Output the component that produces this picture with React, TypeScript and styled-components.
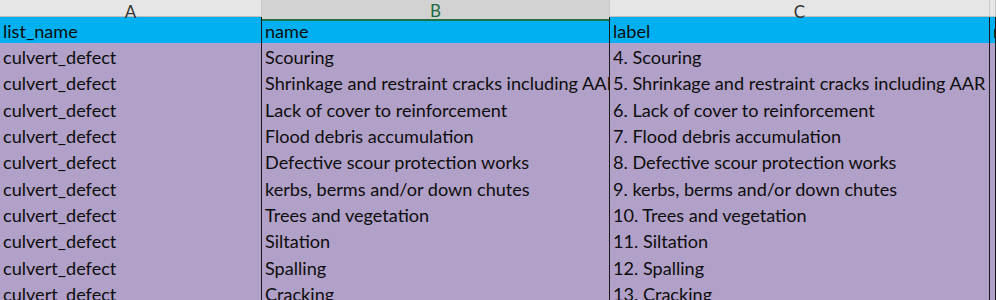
import React from 'react'
import styled, { createGlobalStyle, css } from 'styled-components'

const GlobalStyle = createGlobalStyle`
  html, body {
    margin: 0;
    padding: 0;
    background: #ffffff;
    overflow: hidden;
  }
`

const COLUMNS = '262px 348px 380px 1fr'

const Sheet = styled.div`
  width: 996px;
  height: 300px;
  overflow: hidden;
  font-family: Lato, 'Liberation Sans', sans-serif;
`

const HeaderRow = styled.div`
  display: grid;
  grid-template-columns: ${COLUMNS};
  height: 17px;
  background: #e6e6e6;
  border-bottom: 1px solid #bdbdbd;
  box-sizing: border-box;
`

const ColumnHeader = styled.div<{ $selected?: boolean }>`
  display: flex;
  align-items: center;
  justify-content: center;
  box-sizing: border-box;
  border-right: 1px solid #c8c8c8;
  font-size: 17px;
  line-height: 1;
  color: #333;
  padding-top: 2px;

  ${({ $selected }) =>
    $selected &&
    css`
      background: #d2d2d2;
      color: #1e6b41;
      border-bottom: 2px solid #217346;
      margin-bottom: -1px;
    `}
`

const Row = styled.div<{ $fill: string }>`
  display: grid;
  grid-template-columns: ${COLUMNS};
  height: 26.33px;
  background: ${({ $fill }) => $fill};
`

const Cell = styled.div`
  display: flex;
  align-items: center;
  box-sizing: border-box;
  padding-left: 3px;
  padding-top: 1px;
  border-right: 1px solid #1a1a1a;
  font-size: 18.1px;
  color: #0d0d0d;
  white-space: nowrap;
  overflow: hidden;
`

const BLUE = '#00b0f0'
const PURPLE = '#b1a0c7'

const defects = [
  'Scouring',
  'Shrinkage and restraint cracks including AAR',
  'Lack of cover to reinforcement',
  'Flood debris accumulation',
  'Defective scour protection works',
  'kerbs, berms and/or down chutes',
  'Trees and vegetation',
  'Siltation',
  'Spalling',
  'Cracking',
]

export default function App() {
  return (
    <Sheet>
      <GlobalStyle />
      <HeaderRow>
        <ColumnHeader>A</ColumnHeader>
        <ColumnHeader $selected>B</ColumnHeader>
        <ColumnHeader>C</ColumnHeader>
        <ColumnHeader />
      </HeaderRow>
      <Row $fill={BLUE}>
        <Cell>list_name</Cell>
        <Cell>name</Cell>
        <Cell>label</Cell>
        <Cell>media::image</Cell>
      </Row>
      {defects.map((name, i) => (
        <Row key={name} $fill={PURPLE}>
          <Cell>culvert_defect</Cell>
          <Cell>{name}</Cell>
          <Cell>
            {i + 4}. {name}
          </Cell>
          <Cell />
        </Row>
      ))}
    </Sheet>
  )
}
